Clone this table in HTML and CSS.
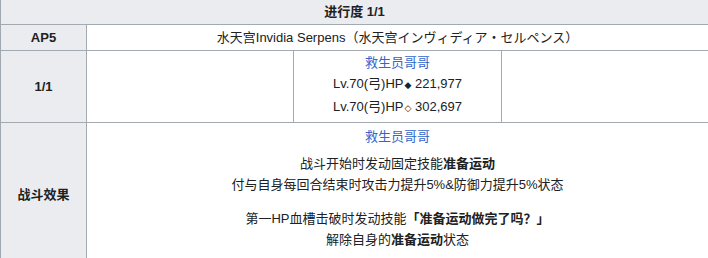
FILE: index.html
```html
<!DOCTYPE html>
<html lang="zh">
<head>
<meta charset="utf-8">
<title>进行度 1/1</title>
<link rel="stylesheet" href="styles.css">
</head>
<body>
<div class="board">
  <div class="cell head">进行度 1/1</div>

  <div class="cell label row-ap">AP5</div>
  <div class="cell body row-ap">水天宫Invidia Serpens（水天宫インヴィディア・セルペンス）</div>

  <div class="cell label">1/1</div>
  <div class="cell nest">
    <div class="slot"></div>
    <div class="slot">
      <div class="line"><span class="link">救生员哥哥</span></div>
      <div class="line">Lv.70(弓)HP<span class="gem">◆</span> 221,977</div>
      <div class="line">Lv.70(弓)HP<span class="gem">◇</span> 302,697</div>
    </div>
    <div class="slot"></div>
  </div>

  <div class="cell label">战斗效果</div>
  <div class="cell body effect">
    <div class="line"><span class="link">救生员哥哥</span></div>
    <div class="para first">
      <div class="line">战斗开始时发动固定技能<b>准备运动</b></div>
      <div class="line">付与自身每回合结束时攻击力提升5%&amp;防御力提升5%状态</div>
    </div>
    <div class="para">
      <div class="line">第一HP血槽击破时发动技能<b>「准备运动做完了吗？」</b></div>
      <div class="line">解除自身的<b>准备运动</b>状态</div>
    </div>
  </div>
</div>
</body>
</html>
```

FILE: styles.css
```css
html, body {
  margin: 0;
  padding: 0;
  background: #ffffff;
  overflow: hidden;
}

body {
  font-family: "Liberation Sans", "Noto Sans CJK SC", sans-serif;
  font-size: 13px;
  color: #202122;
}

.board {
  width: 708px;
  box-sizing: border-box;
  margin-top: -1px;
  padding: 1px 0 1px 1px;
  display: grid;
  grid-template-columns: 85px 1fr;
  gap: 1px;
  background: #a2a9b1;
}

.cell {
  background: #ffffff;
  text-align: center;
  line-height: 19px;
  padding: 3px 5px;
  display: flex;
  flex-direction: column;
  justify-content: center;
}

.head {
  grid-column: 1 / -1;
  background: #eaecf0;
  font-weight: bold;
  padding: 2px 5px 3px;
}

.label {
  background: #eaecf0;
  font-weight: bold;
}

.nest {
  padding: 0;
  display: grid;
  grid-template-columns: 1fr 1fr 1fr;
  gap: 1px;
  background: #a2a9b1;
}

.slot {
  background: #ffffff;
  padding: 1px 4px 3px;
  line-height: 21px;
  display: flex;
  flex-direction: column;
  justify-content: center;
}

.link {
  color: #3366cc;
}

.gem {
  font-family: "DejaVu Sans", sans-serif;
  font-size: 9px;
  margin-left: 1px;
}

.effect {
  justify-content: flex-start;
  line-height: 21px;
  padding: 3px 5px 16px;
}

.para {
  margin-top: 13px;
}

.para.first {
  margin-top: 6px;
}

b {
  font-weight: bold;
}
```
